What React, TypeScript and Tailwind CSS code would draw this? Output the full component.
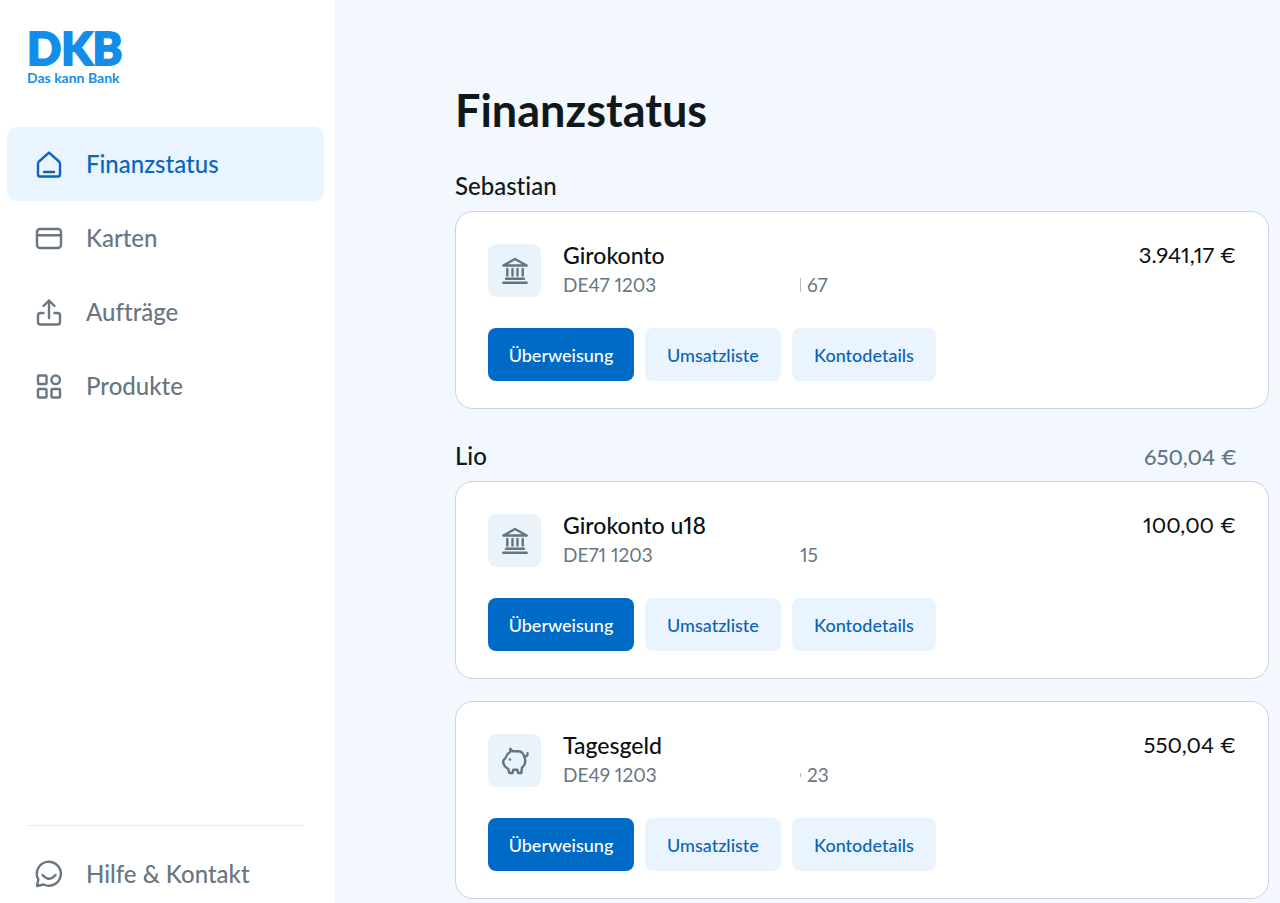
import type { ReactNode } from 'react';
import cn from 'clsx';

type IconProps = { children: ReactNode };

function Icon({ children }: IconProps) {
	return (
		<svg
			viewBox="0 0 28 28"
			className="size-7 shrink-0"
			fill="none"
			stroke="currentColor"
			strokeWidth="2.4"
			strokeLinecap="round"
			strokeLinejoin="round"
			aria-hidden="true"
		>
			{children}
		</svg>
	);
}

const HomeIcon = () => (
	<Icon>
		<path d="M14 2.6 4 11.5Q3 12.5 3 14v10.5Q3 26.5 5 26.5h18q2 0 2-2V14q0-1.5-1-2.5Z" />
		<path d="M9 22h10" />
	</Icon>
);

const CardIcon = () => (
	<Icon>
		<rect x="2" y="5" width="24" height="19" rx="3" />
		<path d="M2 11.3h24" />
	</Icon>
);

const UploadIcon = () => (
	<Icon>
		<path d="M14 20V2.5M8.5 8 14 2.5 19.5 8" />
		<path d="M8.5 15h-3Q3 15 3 17.5V24q0 2.500 2.500 2.500h17Q25 26.500 25 24v-6.500Q25 15 22.500 15h-3" />
	</Icon>
);

const GridIcon = () => (
	<Icon>
		<rect x="3" y="3.5" width="8.5" height="8.5" rx="1" />
		<circle cx="20.7" cy="7.8" r="4.3" />
		<rect x="3" y="17" width="8.5" height="8.5" rx="1" />
		<rect x="16.5" y="17" width="8.5" height="8.5" rx="1" />
	</Icon>
);

const ChatIcon = () => (
	<Icon>
		<path d="M2 26 3.3 19.5A12 12 0 1 1 8.5 24.5Z" />
		<path d="M7.5 15Q14 22.5 20.5 15" />
	</Icon>
);

const BankIcon = () => (
	<Icon>
		<path d="M2.3 8.5 14 2l11.7 6.5Z" />
		<path d="M6.3 12v6.5M11.5 12v6.5M16.5 12v6.5M21.7 12v6.5M5 21.7h18M2.3 25.7h23.4" />
	</Icon>
);

const PigIcon = () => (
	<Icon>
		<path d="M9.3 1.7 11.5 4.3H17Q21.5 4.3 23.3 9.3 25 14 23.5 17.5 22.5 19.5 21 20.5L20.3 26H17.2L16.3 22.7H12.3L11.5 26H8.3L7.3 22Q3.5 20 2.5 16.5 1.7 14 3 12.5 4.6 11.5 5.2 9.5 6 6.5 9.2 5Z" />
		<path d="M23.3 9.5Q26.8 9.7 26.6 6.3" />
		<circle cx="9" cy="12.5" r="1.2" fill="currentColor" stroke="none" />
	</Icon>
);

const navItems = [
	{ label: 'Finanzstatus', icon: <HomeIcon />, active: true },
	{ label: 'Karten', icon: <CardIcon /> },
	{ label: 'Aufträge', icon: <UploadIcon /> },
	{ label: 'Produkte', icon: <GridIcon /> },
];

type Account = {
	name: string;
	iban: string;
	ibanEnd: string;
	amount: string;
	icon: ReactNode;
	tick?: string;
};

const groups: { owner: string; total?: string; accounts: Account[] }[] = [
	{
		owner: 'Sebastian',
		accounts: [
			{ name: 'Girokonto', iban: 'DE47 1203', ibanEnd: '67', amount: '3.941,17 €', icon: <BankIcon />, tick: 'h-3.5' },
		],
	},
	{
		owner: 'Lio',
		total: '650,04 €',
		accounts: [
			{ name: 'Girokonto u18', iban: 'DE71 1203', ibanEnd: '15', amount: '100,00 €', icon: <BankIcon /> },
			{ name: 'Tagesgeld', iban: 'DE49 1203', ibanEnd: '23', amount: '550,04 €', icon: <PigIcon />, tick: 'h-1' },
		],
	},
];

function AccountCard({ account }: { account: Account }) {
	return (
		<article className="rounded-[18px] border border-[#c5d5e2] bg-white px-8 pt-8 pb-[27px]">
			<div className="flex gap-[22px]">
				<div className="flex size-[53px] shrink-0 items-center justify-center rounded-lg bg-[#eaf3fa] text-[#627582]">
					{account.icon}
				</div>
				<div className="-mt-[5px] flex-1">
					<div className="flex justify-between leading-8 text-[#0b1014]">
						<h3 className="text-[23px] font-medium">{account.name}</h3>
						<p className="text-[22px]">{account.amount}</p>
					</div>
					<p className="flex items-center text-[19px] leading-7 text-[#677883]">
						<span className="w-[237px]">{account.iban}</span>
						{account.tick && <span className={cn('mr-1.5 w-px bg-[#b3bec6]', account.tick)} />}
						<span>{account.ibanEnd}</span>
					</p>
				</div>
			</div>
			<div className="mt-[29px] flex gap-[11px] text-lg font-medium">
				<button type="button" className="h-[53px] w-[146px] rounded-lg bg-[#006ac7] text-white">
					Überweisung
				</button>
				<button type="button" className="h-[53px] w-[136px] rounded-lg bg-[#eaf4fe] text-[#0b63b5]">
					Umsatzliste
				</button>
				<button type="button" className="h-[53px] w-[144px] rounded-lg bg-[#eaf4fe] text-[#0b63b5]">
					Kontodetails
				</button>
			</div>
		</article>
	);
}

export default function App() {
	return (
		<div className="flex min-h-screen bg-[#f2f8fe] font-[Lato,sans-serif] proportional-nums [font-variant-ligatures:none]">
			<aside className="flex w-[335px] shrink-0 flex-col bg-white">
				<a href="#" className="mt-[26px] ml-[27px] flex flex-col self-start text-[#148dea]">
					<span className="text-[45px] leading-[44px] font-black [-webkit-text-stroke:2px]">DKB</span>
					<span className="text-sm leading-4 font-bold">Das kann Bank</span>
				</a>
				<nav className="mt-[41px] mr-[11px] ml-[7px]">
					<ul>
						{navItems.map((item) => (
							<li key={item.label}>
								<a
									href="#"
									className={cn(
										'flex h-[74px] items-center gap-[23px] rounded-[10px] pl-7 text-2xl font-medium',
										item.active ? 'bg-[#e9f4ff] text-[#0a66bc]' : 'text-[#687782]'
									)}
								>
									{item.icon}
									{item.label}
								</a>
							</li>
						))}
					</ul>
				</nav>
				<div className="mt-auto mr-[31px] ml-7 border-t border-[#e3ecf0] pt-[19px]">
					<a href="#" className="flex h-[58px] items-center gap-[23px] pl-[7px] text-2xl font-medium text-[#687782]">
						<ChatIcon />
						Hilfe &amp; Kontakt
					</a>
				</div>
			</aside>
			<main className="flex-1 pt-[81px] pr-[11px] pb-1 pl-[120px]">
				<h1 className="text-[45px] leading-[58px] font-bold text-[#11181c]">Finanzstatus</h1>
				{groups.map((group) => (
					<section key={group.owner} className="mt-8">
						<div className="mb-2.5 flex h-[30px] items-center justify-between pr-8">
							<h2 className="text-2xl font-medium text-[#11181c]">{group.owner}</h2>
							{group.total && <p className="text-[22px] font-medium text-[#627582]">{group.total}</p>}
						</div>
						<div className="flex flex-col gap-[22px]">
							{group.accounts.map((account) => (
								<AccountCard key={account.name} account={account} />
							))}
						</div>
					</section>
				))}
			</main>
		</div>
	);
}
